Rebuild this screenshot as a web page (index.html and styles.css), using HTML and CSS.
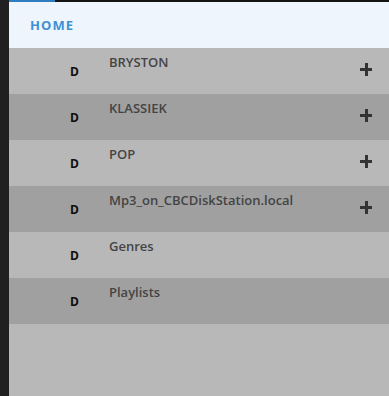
FILE: index.html
```html
<!DOCTYPE html>
<html lang="nl">

<head>
    <meta charset="utf-8">
    <meta name="viewport" content="width=device-width, initial-scale=1.0">
    <title>Home</title>

    <link rel="stylesheet" href="styles.css">
</head>

<body>

<div class="app">
    <div class="strip"></div>

    <div class="paneel">
        <div class="balk"><span class="actief"></span></div>

        <header class="kop">
            <h1>HOME</h1>
        </header>

        <main class="lijst">
            <div class="rij">
                <span class="type">D</span>
                <span class="naam">BRYSTON</span>
                <span class="plus"></span>
            </div>
            <div class="rij donker">
                <span class="type">D</span>
                <span class="naam">KLASSIEK</span>
                <span class="plus"></span>
            </div>
            <div class="rij">
                <span class="type">D</span>
                <span class="naam">POP</span>
                <span class="plus"></span>
            </div>
            <div class="rij donker">
                <span class="type">D</span>
                <span class="naam">Mp3_on_CBCDiskStation.local</span>
                <span class="plus"></span>
            </div>
            <div class="rij">
                <span class="type">D</span>
                <span class="naam">Genres</span>
            </div>
            <div class="rij donker">
                <span class="type">D</span>
                <span class="naam">Playlists</span>
            </div>
        </main>
    </div>
</div>

</body>

</html>
```

FILE: styles.css
```css
body {
    margin: 0;
    font-family: "Open Sans", sans-serif;
    background: #b8b8b8;
}

.app {
    display: flex;
    height: 396px;
}

.strip {
    width: 9px;
    background: #202020;
}

.paneel {
    flex: 1;
    background: #b8b8b8;
}

.balk {
    height: 2px;
    background: #141414;
}

.balk .actief {
    display: block;
    width: 46px;
    height: 2px;
    background: #2f7cc1;
}

.kop {
    height: 46px;
    background: #eef5fd;
    display: flex;
    align-items: center;
    padding-left: 21px;
}

.kop h1 {
    margin: 0;
    font-size: 13px;
    font-weight: 700;
    letter-spacing: 1.1px;
    color: #3f90d6;
}

.rij {
    display: flex;
    height: 46px;
    background: #b8b8b8;
}

.rij.donker {
    background: #a0a0a0;
}

.type {
    width: 100px;
    padding-left: 61px;
    box-sizing: border-box;
    align-self: center;
    font-size: 12px;
    font-weight: 700;
    color: #0d0d0d;
    margin-top: 1px;
}

.naam {
    flex: 1;
    font-size: 13px;
    font-weight: 600;
    color: #444;
    padding-top: 5px;
}

.plus {
    width: 12px;
    height: 13px;
    margin: 15px 17px 0 0;
    align-self: flex-start;
    background:
        linear-gradient(#333, #333) center / 12px 3px no-repeat,
        linear-gradient(#333, #333) center / 3px 13px no-repeat;
}
```
